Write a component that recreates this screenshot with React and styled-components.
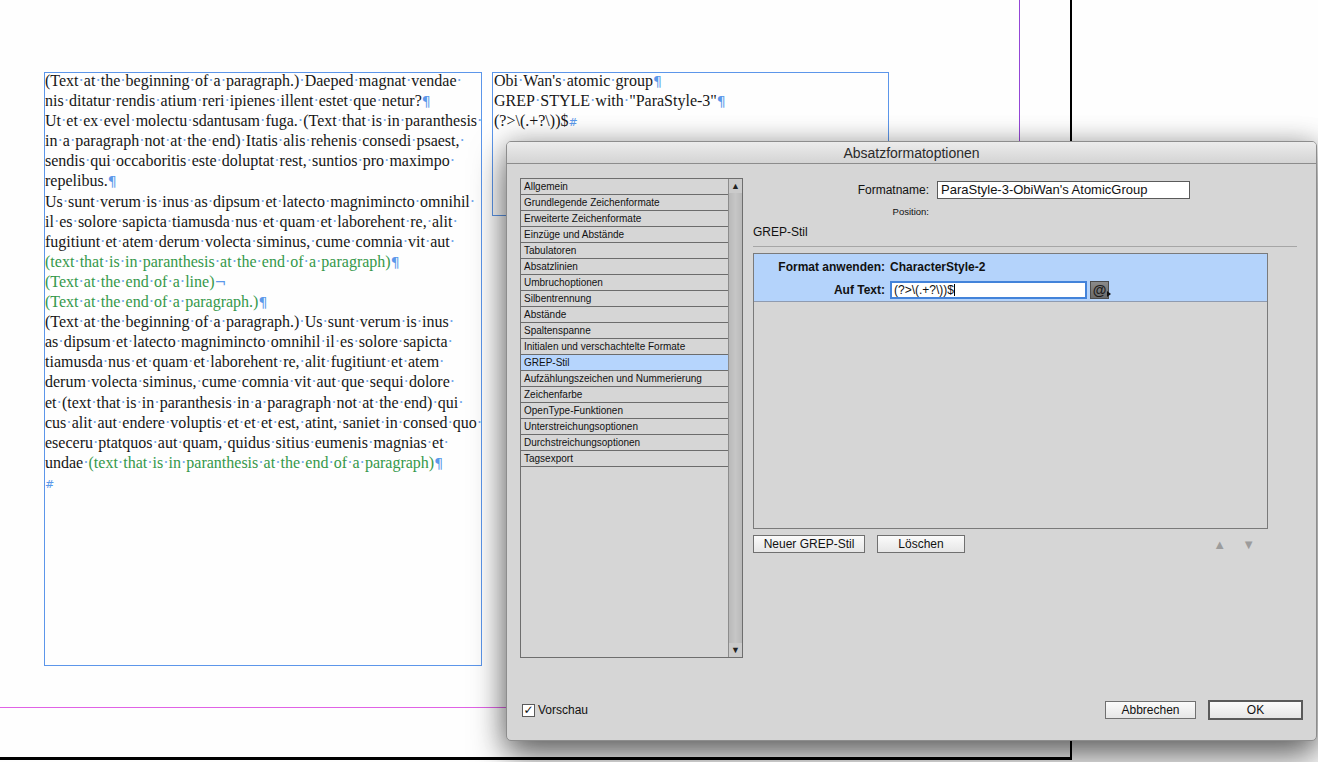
import React from "react";
import styled, { createGlobalStyle } from "styled-components";

const GlobalStyle = createGlobalStyle`
  html, body {
    margin: 0;
    padding: 0;
    background: #fefefe;
    overflow: hidden;
  }
`;

const Screen = styled.div`
  position: relative;
  width: 1318px;
  height: 762px;
  overflow: hidden;
  background: #fefefe;
`;

const Page = styled.div`
  position: relative;
  width: 1070px;
  height: 757px;
  border-right: 2px solid #000;
  border-bottom: 3px solid #000;
  background: #fefefe;
`;

const MarginGuide = styled.div`
  position: absolute;
  left: 0;
  top: 0;
  width: 1019px;
  height: 707px;
  border-right: 1px solid #9446d6;
  border-bottom: 1px solid #e062e6;
`;

const Frame = styled.div`
  position: absolute;
  box-sizing: border-box;
  left: ${({ $x }) => $x}px;
  top: ${({ $y }) => $y}px;
  width: ${({ $w }) => $w}px;
  height: ${({ $h }) => $h}px;
  border: 1px solid #5c96ea;
  padding-left: ${({ $pad }) => $pad || 0}px;
`;

const Story = styled.div`
  margin-top: -2px;
  font-family: "Liberation Serif", "Times New Roman", serif;
  font-size: 16px;
  line-height: 20.1px;
  color: #161616;
`;

const Line = styled.div`
  white-space: nowrap;
`;

const Seg = styled.span`
  color: ${({ $green }) => ($green ? "#35984a" : "inherit")};
`;

const SpaceDot = styled.span`
  color: #6aa3ec;
`;

const Mark = styled.span`
  color: #5b98ea;
  font-family: "DejaVu Sans", sans-serif;
  font-size: ${({ $small }) => ($small ? 11 : 14)}px;
`;

const LEFT = [
  { segs: [{ t: "(Text at the beginning of a paragraph.) Daeped magnat vendae " }] },
  { segs: [{ t: "nis ditatur rendis atium reri ipienes illent estet que netur?" }], end: "¶" },
  { segs: [{ t: "Ut et ex evel molectu sdantusam fuga. (Text that is in paranthesis " }] },
  { segs: [{ t: "in a paragraph not at the end) Itatis alis rehenis consedi psaest, " }] },
  { segs: [{ t: "sendis qui occaboritis este doluptat rest, suntios pro maximpo " }] },
  { segs: [{ t: "repelibus." }], end: "¶" },
  { segs: [{ t: "Us sunt verum is inus as dipsum et latecto magnimincto omnihil " }] },
  { segs: [{ t: "il es solore sapicta tiamusda nus et quam et laborehent re, alit " }] },
  { segs: [{ t: "fugitiunt et atem derum volecta siminus, cume comnia vit aut " }] },
  { segs: [{ t: "(text that is in paranthesis at the end of a paragraph)", g: true }], end: "¶" },
  { segs: [{ t: "(Text at the end of a line)", g: true }], end: "¬" },
  { segs: [{ t: "(Text at the end of a paragraph.)", g: true }], end: "¶" },
  { segs: [{ t: "(Text at the beginning of a paragraph.) Us sunt verum is inus " }] },
  { segs: [{ t: "as dipsum et latecto magnimincto omnihil il es solore sapicta " }] },
  { segs: [{ t: "tiamusda nus et quam et laborehent re, alit fugitiunt et atem " }] },
  { segs: [{ t: "derum volecta siminus, cume comnia vit aut que sequi dolore " }] },
  { segs: [{ t: "et (text that is in paranthesis in a paragraph not at the end) qui " }] },
  { segs: [{ t: "cus alit aut endere voluptis et et et est, atint, saniet in consed quo " }] },
  { segs: [{ t: "eseceru ptatquos aut quam, quidus sitius eumenis magnias et " }] },
  {
    segs: [
      { t: "undae " },
      { t: "(text that is in paranthesis at the end of a paragraph)", g: true },
    ],
    end: "¶",
  },
  { segs: [], end: "#" },
];

const RIGHT = [
  { segs: [{ t: "Obi Wan's atomic group" }], end: "¶" },
  { segs: [{ t: 'GREP STYLE with "ParaStyle-3"' }], end: "¶" },
  { segs: [{ t: "(?>\\(.+?\\))$" }], end: "#" },
];

function dotted(text) {
  const words = text.split(" ");
  const out = [];
  words.forEach((w, i) => {
    if (i > 0) out.push(<SpaceDot key={"d" + i}>·</SpaceDot>);
    if (w) out.push(w);
  });
  return out;
}

function StoryText({ lines }) {
  return (
    <Story>
      {lines.map((line, i) => (
        <Line key={i}>
          {line.segs.map((s, j) => (
            <Seg key={j} $green={s.g}>
              {dotted(s.t)}
            </Seg>
          ))}
          {line.end && <Mark $small={line.end === "#"}>{line.end}</Mark>}
        </Line>
      ))}
    </Story>
  );
}

/* ---------- dialog ---------- */

const Dialog = styled.div`
  position: absolute;
  left: 506px;
  top: 141px;
  width: 811px;
  height: 600px;
  box-sizing: border-box;
  background: #d6d6d6;
  border: 1px solid #8d8d8d;
  border-radius: 5px;
  box-shadow: 0 16px 34px rgba(0, 0, 0, 0.55), 0 0 26px rgba(0, 0, 0, 0.22);
  display: flex;
  flex-direction: column;
  overflow: hidden;
  font-family: "Liberation Sans", Arial, sans-serif;
  color: #111;
`;

const TitleBar = styled.div`
  height: 21px;
  border-bottom: 1px solid #8c8c8c;
  background: linear-gradient(#ececec, #d4d4d4);
  display: flex;
  align-items: center;
  justify-content: center;
  font-size: 14px;
  color: #2b2b2b;
`;

const Body = styled.div`
  display: grid;
  grid-template-columns: 223px 544px;
  column-gap: 10px;
  padding: 14px 0 0 13px;
`;

const ListBox = styled.div`
  box-sizing: border-box;
  height: 480px;
  border: 1px solid #6e6e6e;
  display: flex;
`;

const Items = styled.div`
  flex: 1;
`;

const Item = styled.div`
  height: 15px;
  border-bottom: 1px solid #6c6c6c;
  padding-left: 3px;
  font-size: 10px;
  line-height: 15px;
  white-space: nowrap;
  background: ${({ $active }) => ($active ? "#b6d5fd" : "transparent")};
`;

const Scrollbar = styled.div`
  width: 13px;
  border-left: 1px solid #8c8c8c;
  background: linear-gradient(90deg, #b9b9b9, #c6c6c6 50%, #b9b9b9);
  display: flex;
  flex-direction: column;
  justify-content: space-between;
`;

const ScrollArrow = styled.div`
  height: 14px;
  display: flex;
  align-items: center;
  justify-content: center;
  background: #cbcbcb;
  color: #222;
  font-size: 9px;
  line-height: 1;
`;

const RightPanel = styled.div`
  display: flex;
  flex-direction: column;
`;

const FieldRow = styled.div`
  display: grid;
  grid-template-columns: 176px 253px;
  column-gap: 8px;
  align-items: center;
  margin-top: ${({ $mt }) => $mt}px;
`;

const Label = styled.div`
  text-align: right;
  font-size: ${({ $size }) => $size || 12}px;
  font-weight: ${({ $bold }) => ($bold ? 700 : 400)};
  white-space: nowrap;
`;

const TextInput = styled.div`
  box-sizing: border-box;
  height: ${({ $h }) => $h || 18}px;
  width: ${({ $w }) => ($w ? $w + "px" : "auto")};
  background: #fff;
  border: ${({ $focus }) => ($focus ? "2px solid #4383da" : "1px solid #5a5a5a")};
  padding-left: ${({ $focus }) => ($focus ? 2 : 3)}px;
  font-size: ${({ $size }) => $size || 13}px;
  font-weight: 400;
  line-height: ${({ $focus }) => ($focus ? 14 : 16)}px;
  white-space: nowrap;
  overflow: hidden;
`;

const Caret = styled.span`
  display: inline-block;
  width: 1px;
  height: 12px;
  background: #000;
  vertical-align: -2px;
`;

const Heading = styled.div`
  margin-top: 8px;
  font-size: 12px;
  line-height: 14px;
`;

const Separator = styled.div`
  margin-top: 7px;
  height: 1px;
  background: #a6a6a6;
`;

const GrepBox = styled.div`
  box-sizing: border-box;
  margin-top: 6px;
  width: 515px;
  height: 276px;
  border: 1px solid #7a7a7a;
`;

const Rule = styled.div`
  background: #b4d3fb;
  border-bottom: 1px solid #8f9bb0;
  padding: 6px 0 2px;
  display: grid;
  grid-template-columns: 131px auto;
  column-gap: 5px;
  row-gap: 7px;
  align-items: center;
`;

const RuleValue = styled.div`
  display: flex;
  align-items: center;
  gap: 3px;
  font-size: 12px;
  font-weight: 700;
`;

const AtButton = styled.div`
  position: relative;
  box-sizing: border-box;
  width: 19px;
  height: 18px;
  border: 1px solid #4c4c4c;
  background: linear-gradient(#8a8a8a, #6a6a6a);
  color: #1c1c1c;
  font-size: 14px;
  font-weight: 700;
  line-height: 16px;
  text-align: center;
`;

const AtArrow = styled.span`
  position: absolute;
  right: -3px;
  bottom: 1px;
  width: 0;
  height: 0;
  border-top: 3px solid transparent;
  border-bottom: 3px solid transparent;
  border-left: 4px solid #111;
`;

const ButtonRow = styled.div`
  margin-top: 6px;
  width: 515px;
  display: flex;
  align-items: center;
  gap: 12px;
`;

const Button = styled.div`
  box-sizing: border-box;
  width: ${({ $w }) => $w}px;
  height: ${({ $default }) => ($default ? 20 : 18)}px;
  border: ${({ $default }) => ($default ? "2px solid #5a5a5a" : "1px solid #707070")};
  background: linear-gradient(#fbfbfb, #e6e6e6);
  display: flex;
  align-items: center;
  justify-content: center;
  font-size: 12px;
  color: #111;
`;

const Arrows = styled.div`
  margin-left: auto;
  margin-right: 13px;
  display: flex;
  gap: 16px;
  color: #9c9c9c;
  font-size: 13px;
`;

const Footer = styled.div`
  margin-top: auto;
  padding: 0 13px 20px 15px;
  display: flex;
  align-items: center;
`;

const Check = styled.div`
  box-sizing: border-box;
  width: 13px;
  height: 13px;
  border: 1px solid #5a5a5a;
  background: #fff;
  display: flex;
  align-items: center;
  justify-content: center;
  font-family: "DejaVu Sans", sans-serif;
  font-size: 12px;
  font-weight: 700;
  line-height: 1;
  color: #111;
`;

const CheckLabel = styled.span`
  margin-left: 3px;
  font-size: 12px;
`;

const FooterButtons = styled.div`
  margin-left: auto;
  display: flex;
  align-items: center;
  gap: 12px;
`;

const SECTIONS = [
  "Allgemein",
  "Grundlegende Zeichenformate",
  "Erweiterte Zeichenformate",
  "Einzüge und Abstände",
  "Tabulatoren",
  "Absatzlinien",
  "Umbruchoptionen",
  "Silbentrennung",
  "Abstände",
  "Spaltenspanne",
  "Initialen und verschachtelte Formate",
  "GREP-Stil",
  "Aufzählungszeichen und Nummerierung",
  "Zeichenfarbe",
  "OpenType-Funktionen",
  "Unterstreichungsoptionen",
  "Durchstreichungsoptionen",
  "Tagsexport",
];

function ParagraphStyleDialog() {
  return (
    <Dialog>
      <TitleBar>Absatzformatoptionen</TitleBar>
      <Body>
        <ListBox>
          <Items>
            {SECTIONS.map((s) => (
              <Item key={s} $active={s === "GREP-Stil"}>
                {s}
              </Item>
            ))}
          </Items>
          <Scrollbar>
            <ScrollArrow>▲</ScrollArrow>
            <ScrollArrow>▼</ScrollArrow>
          </Scrollbar>
        </ListBox>

        <RightPanel>
          <FieldRow $mt={3}>
            <Label>Formatname:</Label>
            <TextInput>ParaStyle-3-ObiWan's AtomicGroup</TextInput>
          </FieldRow>
          <FieldRow $mt={7}>
            <Label $size={9.5}>Position:</Label>
            <div />
          </FieldRow>
          <Heading>GREP-Stil</Heading>
          <Separator />
          <GrepBox>
            <Rule>
              <Label $bold>Format anwenden:</Label>
              <RuleValue>CharacterStyle-2</RuleValue>
              <Label $bold>Auf Text:</Label>
              <RuleValue>
                <TextInput $focus $w={197} $size={12}>
                  (?&gt;\(.+?\))$<Caret />
                </TextInput>
                <AtButton>
                  @<AtArrow />
                </AtButton>
              </RuleValue>
            </Rule>
          </GrepBox>
          <ButtonRow>
            <Button $w={112}>Neuer GREP-Stil</Button>
            <Button $w={88}>Löschen</Button>
            <Arrows>
              <span>▲</span>
              <span>▼</span>
            </Arrows>
          </ButtonRow>
        </RightPanel>
      </Body>

      <Footer>
        <Check>✓</Check>
        <CheckLabel>Vorschau</CheckLabel>
        <FooterButtons>
          <Button $w={91}>Abbrechen</Button>
          <Button $w={95} $default>
            OK
          </Button>
        </FooterButtons>
      </Footer>
    </Dialog>
  );
}

export default function App() {
  return (
    <Screen>
      <GlobalStyle />
      <Page>
        <MarginGuide />
        <Frame $x={44} $y={72} $w={438} $h={594}>
          <StoryText lines={LEFT} />
        </Frame>
        <Frame $x={492} $y={72} $w={397} $h={144} $pad={1}>
          <StoryText lines={RIGHT} />
        </Frame>
      </Page>
      <ParagraphStyleDialog />
    </Screen>
  );
}
